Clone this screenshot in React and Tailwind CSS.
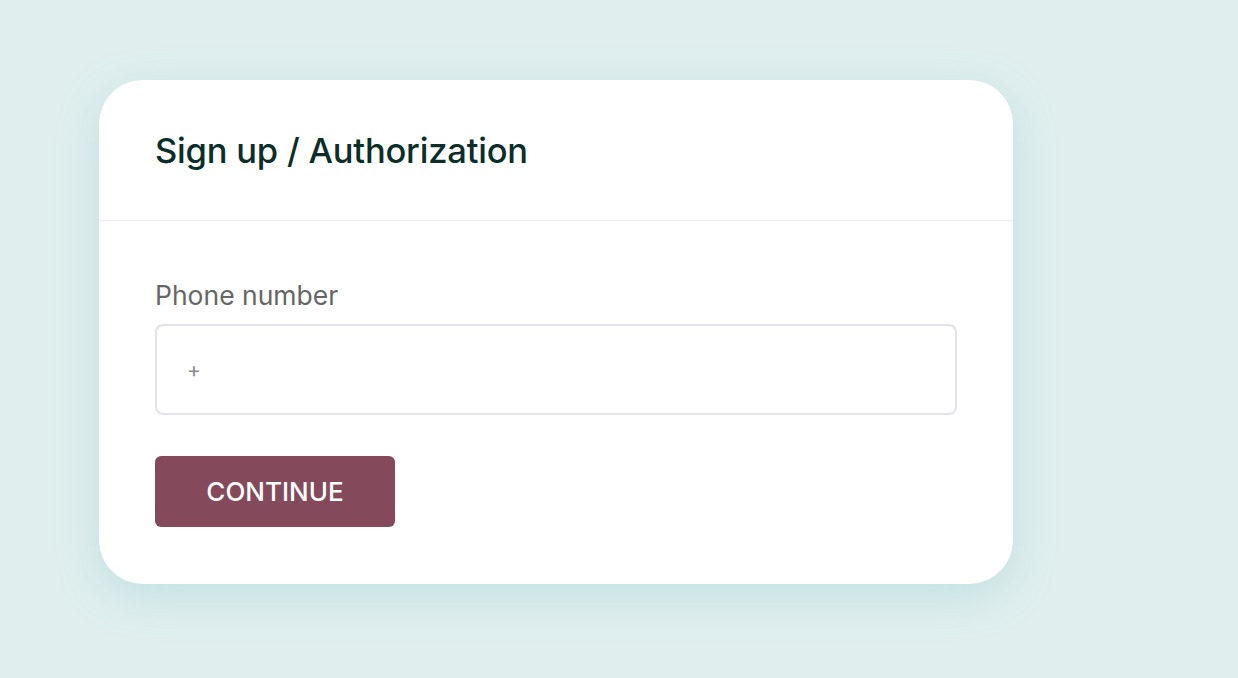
import React from "react";

export default function App() {
  return (
    <div
      className="min-h-[678px] w-full bg-[#e0eeee] pt-[80px] pl-[99px]"
      style={{ fontFamily: "Inter, 'Noto Sans', sans-serif" }}
    >
      <div className="w-[914px] rounded-[44px] bg-white shadow-[0_12px_40px_rgba(140,200,200,0.35)]">
        <div className="flex h-[141px] items-center border-b border-[#ececec] px-[56px] pt-[2px]">
          <h1 className="text-[34.5px] font-medium leading-none tracking-[-0.2px] text-[#0c2e2b]">
            Sign up / Authorization
          </h1>
        </div>
        <div className="px-[56px] pt-[58px] pb-[57px]">
          <label className="block text-[26.5px] leading-[32px] text-[#666666]">
            Phone number
          </label>
          <div className="mt-[13px] flex h-[91px] items-center rounded-[8px] border-2 border-[#e2e2ea] px-[30px]">
            <span className="text-[21px] text-[#8a8a8a]">+</span>
          </div>
          <button className="mt-[41px] flex h-[71px] w-[240px] items-center justify-center rounded-[6px] bg-[#844a5b] text-[26px] font-medium text-white">
            CONTINUE
          </button>
        </div>
      </div>
    </div>
  );
}
